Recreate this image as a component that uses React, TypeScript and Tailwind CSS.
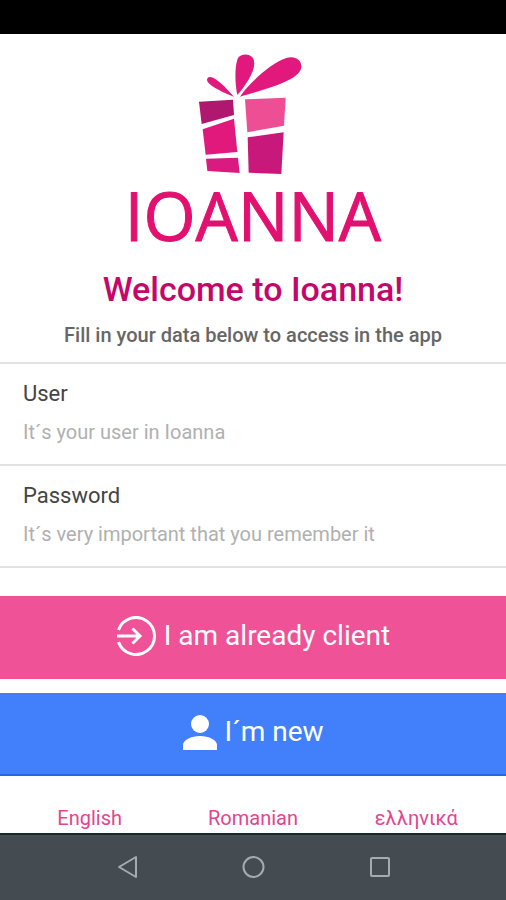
import React from "react";

interface Field {
  id: string;
  label: string;
  type: string;
  placeholder: string;
}

const fields: Field[] = [
  { id: "user", label: "User", type: "text", placeholder: "It´s your user in Ioanna" },
  {
    id: "password",
    label: "Password",
    type: "password",
    placeholder: "It´s very important that you remember it",
  },
];

const languages = [
  { code: "en", name: "English" },
  { code: "ro", name: "Romanian" },
  { code: "el", name: "ελληνικά" },
];

const GiftLogo: React.FC = () => (
  <svg viewBox="54 36 330 369" className="w-[110px] h-[123px]" aria-hidden="true">
    {/* Ribbon */}
    <g fill="#e2197c">
      <path d="M162 171C140 162 91 141 82 124C78 113 88 108 99 113C120 124 144 149 162 171Z" />
      <path d="M172 165C164 128 164 76 174 54C182 41 207 39 219 54C234 83 200 132 172 165Z" />
      <path d="M180 170C205 133 270 70 319 54C346 45 369 62 363 86C352 125 244 150 180 170Z" />
    </g>
    {/* Box */}
    <path fill="#b0176f" d="M57 185L159 179L162 225L65 252Z" />
    <path fill="#e2197c" d="M68 268L162 236L172 336L77 344Z" />
    <path fill="#d91a80" d="M78 356L174 353L179 399L82 393Z" />
    <path fill="#ee4e93" d="M195 178L317 173L312 257L202 277Z" />
    <path fill="#c9187b" d="M203 292L311 277L304 402L206 398Z" />
  </svg>
);

const EnterIcon: React.FC = () => (
  <svg
    viewBox="0 0 40 40"
    className="size-10"
    fill="none"
    stroke="currentColor"
    strokeWidth="3"
    aria-hidden="true"
  >
    <path d="M2.5 14A18.5 18.5 0 1 1 2.5 26" />
    <path d="M1 20H24M16.500 12.500L24 20L16.500 27.500" />
  </svg>
);

const PersonIcon: React.FC = () => (
  <svg viewBox="0 0 36 36" className="size-9" fill="currentColor" aria-hidden="true">
    <circle cx="18" cy="10" r="9" />
    <path d="M1 36V31C1 26 9 22 18 22S35 26 35 31V36Z" />
  </svg>
);

const App: React.FC = () => {
  return (
    <div className="flex min-h-screen flex-col bg-white font-['Roboto',sans-serif]">
      {/* Status bar */}
      <div className="h-[34px] bg-black" />

      <main className="flex flex-1 flex-col">
        {/* Brand */}
        <header className="flex flex-col items-center pt-[18px] text-center">
          <GiftLogo />
          <p className="mt-[6px] font-['Open_Sans',sans-serif] text-[67px] leading-[68px] text-[#e2106f] [-webkit-text-stroke:1px_#e2106f]">
            IOANNA
          </p>
          <h1 className="mt-5 text-[34px] leading-10 font-medium text-[#c2086b]">
            Welcome to Ioanna!
          </h1>
          <p className="mt-3 text-xl leading-7 font-medium text-[#666666]">
            Fill in your data below to access in the app
          </p>
        </header>

        <form onSubmit={(e) => e.preventDefault()}>
          <div className="mt-[13px] border-t-2 border-[#e2e2e2]">
            {fields.map((field) => (
              <div key={field.id} className="border-b-2 border-[#e2e2e2] px-[23px] pt-4 pb-[18px]">
                <label htmlFor={field.id} className="block text-[22px] leading-7 text-[#444444]">
                  {field.label}
                </label>
                <input
                  id={field.id}
                  type={field.type}
                  placeholder={field.placeholder}
                  className="mt-[10px] block h-7 w-full text-xl text-[#444444] outline-none placeholder:text-[#b0b0b0]"
                />
              </div>
            ))}
          </div>

          {/* Actions */}
          <div className="mt-7 flex flex-col gap-[14px] text-[28px] text-white">
            <button
              type="submit"
              className="flex h-[83px] w-full items-center justify-center gap-2 bg-[#ef5296] pb-1"
            >
              <EnterIcon />
              I am already client
            </button>
            <button
              type="button"
              className="flex h-[83px] w-full items-center justify-center gap-[6px] border-b-2 border-[#1f6ae8] bg-[#427ffb] pb-1"
            >
              <PersonIcon />
              I´m new
            </button>
          </div>
        </form>

        {/* Languages */}
        <nav className="mt-7 grid grid-cols-3 px-2 text-center text-xl leading-7 text-[#e2458f]">
          {languages.map((language) => (
            <a key={language.code} href={`#${language.code}`} lang={language.code}>
              {language.name}
            </a>
          ))}
        </nav>
      </main>

      {/* System navigation */}
      <footer className="flex h-[67px] items-center justify-center gap-[102px] border-t-2 border-[#17292c] bg-[#454c51] pb-[2px] text-[#a5abae]">
        <button type="button" aria-label="Back">
          <svg viewBox="0 0 24 24" className="size-6" fill="none" stroke="currentColor" strokeWidth="2">
            <path d="M21 2V22L4 12Z" strokeLinejoin="round" />
          </svg>
        </button>
        <button type="button" aria-label="Home">
          <svg viewBox="0 0 24 24" className="size-6" fill="none" stroke="currentColor" strokeWidth="2">
            <circle cx="12.500" cy="12" r="10" />
          </svg>
        </button>
        <button type="button" aria-label="Recent apps">
          <svg viewBox="0 0 24 24" className="size-6" fill="none" stroke="currentColor" strokeWidth="2">
            <rect x="4" y="3" width="18" height="18" rx="1" />
          </svg>
        </button>
      </footer>
    </div>
  );
};

export default App;
